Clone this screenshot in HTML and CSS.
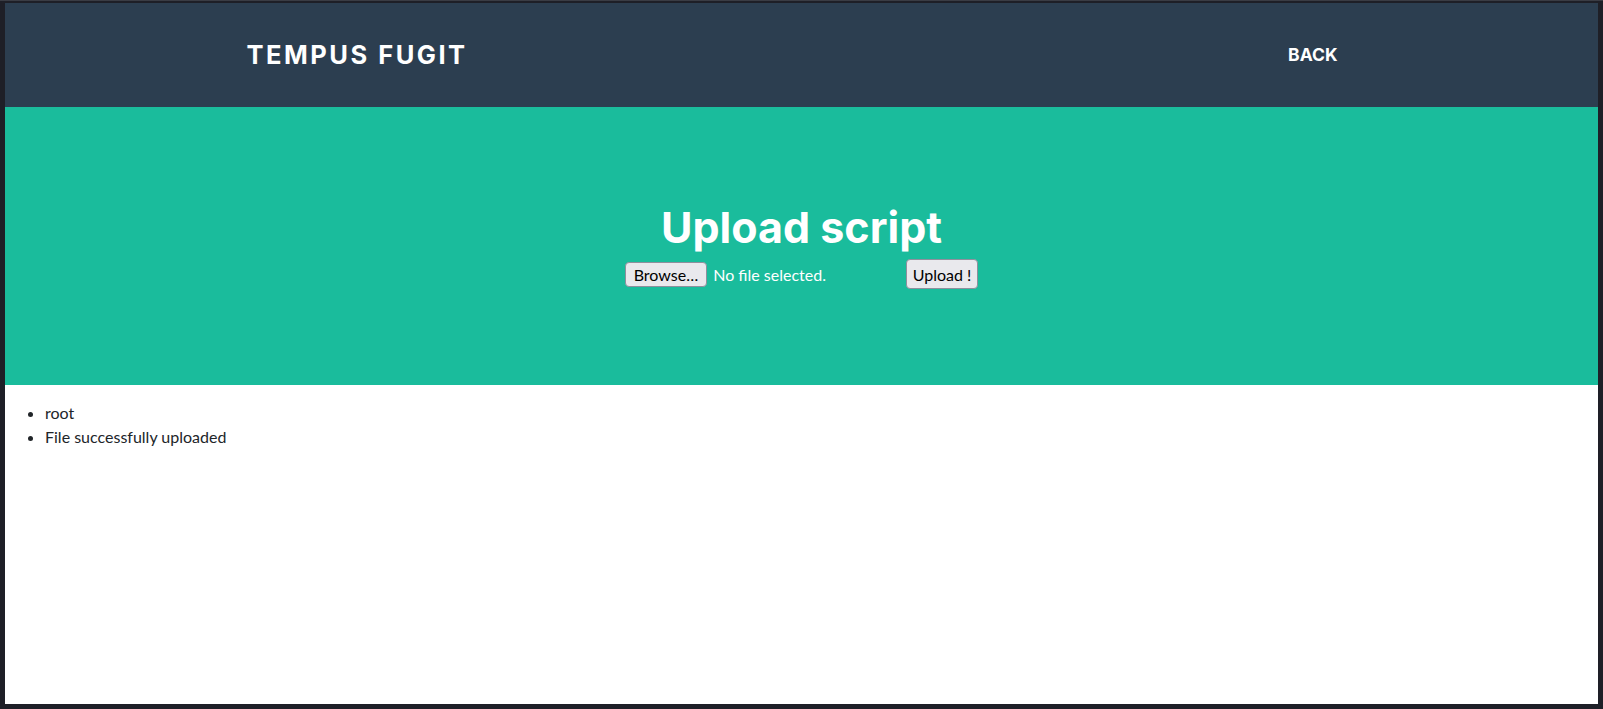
FILE: index.html
```html
<!DOCTYPE html>
<html lang="en">
<head>
<meta charset="utf-8">
<title>Tempus Fugit - Upload script</title>
<link rel="stylesheet" href="styles.css">
</head>
<body>
<div class="frame">
  <div class="page">
    <header class="navbar">
      <div class="container nav-inner">
        <a class="brand" href="#">Tempus Fugit</a>
        <a class="nav-link" href="#">Back</a>
      </div>
    </header>
    <section class="masthead">
      <h1 class="masthead-title">Upload script</h1>
      <form class="upload-form">
        <div class="file-input">
          <button type="button" class="btn btn-browse">Browse…</button>
          <span class="file-label">No file selected.</span>
        </div>
        <button type="button" class="btn btn-upload">Upload !</button>
      </form>
    </section>
    <ul class="messages">
      <li>root</li>
      <li>File successfully uploaded</li>
    </ul>
  </div>
</div>
</body>
</html>
```
FILE: styles.css
```css
* { box-sizing: border-box; }
html, body { margin: 0; padding: 0; }
body {
  background: #1e1f27;
  font-family: Lato, "Liberation Sans", sans-serif;
}
.frame {
  padding: 2px 5px 5px 5px;
  height: 709px;
  border-top: 1px solid #3a3c44;
}
.page {
  background: #ffffff;
  height: 701px;
  display: flex;
  flex-direction: column;
  overflow: hidden;
}
.navbar {
  background: #2c3e50;
  height: 104px;
  flex: none;
}
.container {
  max-width: 1140px;
  margin: 0 auto;
  padding: 0 15px;
}
.nav-inner {
  height: 100%;
  display: flex;
  align-items: center;
  justify-content: space-between;
  padding-bottom: 2px;
}
.brand {
  font-family: Inter, "Open Sans", sans-serif;
  font-weight: 700;
  font-size: 25.5px;
  text-transform: uppercase;
  color: #ffffff;
  text-decoration: none;
  letter-spacing: 2.5px;
}
.nav-link {
  font-family: Inter, "Open Sans", sans-serif;
  font-weight: 700;
  font-size: 17.5px;
  text-transform: uppercase;
  color: #ffffff;
  text-decoration: none;
  margin-right: 19px;
}
.masthead {
  background: #1abc9c;
  height: 278px;
  flex: none;
  padding-top: 94px;
  display: flex;
  flex-direction: column;
  align-items: center;
}
.masthead-title {
  margin: 0 0 6px;
  font-family: Inter, "Open Sans", sans-serif;
  font-weight: 700;
  font-size: 43px;
  line-height: 52px;
  color: #ffffff;
}
.upload-form {
  display: flex;
  align-items: center;
  gap: 4px;
}
.file-input {
  width: 277px;
  display: flex;
  align-items: center;
  gap: 6px;
}
.btn {
  font-family: Lato, "Liberation Sans", sans-serif;
  font-size: 16px;
  color: #000000;
  background: #e9e9ed;
  border: 1px solid #8f8f9d;
  border-radius: 4px;
  padding: 0 6px;
  line-height: 19px;
}
.btn-browse { height: 25px; padding: 0 8px; }
.btn-upload { height: 30px; }
.file-label {
  color: #ffffff;
  font-size: 16px;
}
.messages {
  margin: 16px 0 0;
  padding-left: 40px;
  font-size: 16px;
  line-height: 24px;
  color: #212529;
}
```
